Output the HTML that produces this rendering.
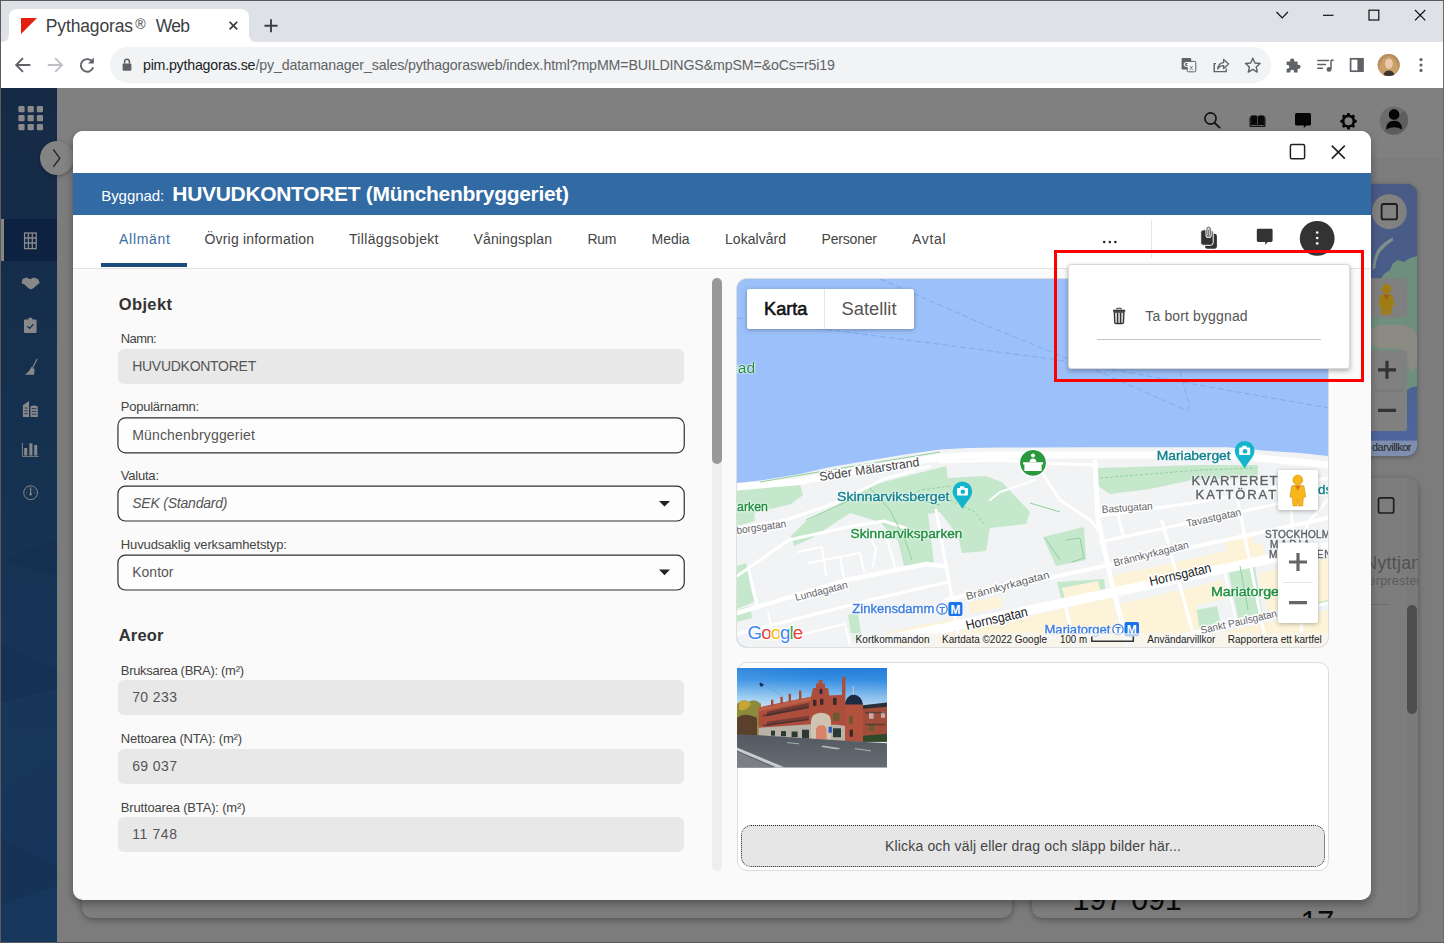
<!DOCTYPE html>
<html lang="sv"><head><meta charset="utf-8"><title>Pythagoras Web</title>
<style>
*{box-sizing:border-box;margin:0;padding:0}
html,body{width:1444px;height:943px;overflow:hidden;background:#808080;font-family:"Liberation Sans",sans-serif;color:#333}
.abs{position:absolute}
.tx{position:absolute;white-space:pre;line-height:normal}
#win{position:absolute;left:0;top:0;width:1444px;height:943px;overflow:hidden}
#win>div,#win>svg{position:absolute}
/* chrome */
#tabbar{left:0;top:0;width:1444px;height:42px;background:#dee1e6}
#tab{left:9px;top:9px;width:240px;height:34px;background:#fff;border-radius:8px 8px 0 0}
#toolbar{left:0;top:42px;width:1444px;height:46px;background:#fff}
#omni{left:110px;top:47px;width:1161px;height:35.6px;border-radius:17.8px;background:#f1f3f4}
/* page */
#page{left:1px;top:88px;width:1443px;height:855px;background:#808080;overflow:hidden}
#side{left:1px;top:88px;width:56px;height:855px;background:linear-gradient(180deg,#152a45 0%,#152d4a 20%,#15314f 40%,#173559 70%,#17365b 100%)}
#sideact{left:1px;top:219px;width:56px;height:42.2px;background:#0c2240;border-left:3px solid #858585}
.bgcard{background:#7d7d7d;border-radius:10px;box-shadow:0 2px 6px rgba(0,0,0,.33)}
#bgclip{left:1371px;top:88px;width:47px;height:855px;overflow:hidden}
#bgclip .tx{margin-left:-1371px;margin-top:-88px}
/* dialog */
#dlg{left:73px;top:131px;width:1298px;height:769px;background:#fafafa;border-radius:10px;overflow:hidden}
#dlgsh{left:73px;top:131px;width:1298px;height:769px;border-radius:10px;box-shadow:0 4px 9px rgba(0,0,0,.33)}
#dlg>div,#dlg>svg{position:absolute}
#dlgtop{left:0;top:0;width:1298px;height:42px;background:#fff}
#dlghead{left:0;top:42px;width:1298px;height:42px;background:#326aa3}
#dlgtabs{left:0;top:84px;width:1298px;height:53.5px;background:#fff;border-bottom:1px solid #e2e2e2}
#tabul{left:28px;top:132px;width:86px;height:4px;background:#1c4c7c}
.inp{left:45px;width:566px;height:34.5px;background:#e8e8e8;border-radius:6px}
.out{left:44px;width:568px;height:36.5px;background:#fdfdfd;border:1.5px solid #2b2b2b;border-radius:8px}
#scrtrack{left:639px;top:147px;width:10px;height:593px;background:#eee;border-radius:5px}
#scrthumb{left:639px;top:147px;width:10px;height:186px;background:#999;border-radius:5px}
#mapbox{left:664px;top:148px;width:591px;height:368px;border-radius:10px;overflow:hidden;background:#9cc0f9;box-shadow:0 0 0 1px #dedede}
#imgbox{left:664px;top:530.5px;width:592px;height:209.5px;border-radius:10px;border:1px solid #dcdcdc;background:#fff}
#drop{left:668px;top:694.3px;width:584px;height:41.5px;border-radius:10px;border:1px dotted #222;background:#e6e6e6}
#popup{left:1068px;top:264px;width:281.5px;height:104.5px;background:#fff;border-radius:3px;border:1px solid #d9d9d9;box-shadow:0 2px 5px rgba(0,0,0,.3)}
#red{left:1054px;top:250px;width:309.5px;height:132px;border:3.3px solid #fe0000}
</style></head><body>
<div id="win">
<div id="tabbar"></div>
<div id="tab"></div>
<div id="toolbar"></div>
<div id="omni"></div>
<div id="page"></div>
<div style="left:57px;top:88px;width:1387px;height:70px;background:#808080"></div>
<div style="left:57px;top:157.6px;width:1387px;height:786px;background:#7c7c7c"></div>
<!-- header icons -->
<svg style="left:1195px;top:104px" width="230" height="36" viewBox="1195 104 230 36">
 <circle cx="1210.5" cy="118.5" r="5.6" fill="none" stroke="#111" stroke-width="1.6"/>
 <path d="M1214.6 122.8 L1219.6 127.6" stroke="#111" stroke-width="1.8" stroke-linecap="round"/>
 <path d="M1250.5 116 Q1254 114.3 1257.4 116 V125.6 Q1254 124.2 1250.5 125.6 Z M1264.6 116 Q1261 114.3 1257.9 116 V125.6 Q1261 124.2 1264.6 125.6 Z" fill="#0a0a0a"/>
 <path d="M1250 117.5 V126.4 H1265 V117.5" fill="none" stroke="#0a0a0a" stroke-width="1"/>
 <path d="M1296.5 113 H1309.5 Q1311 113 1311 114.5 V124 Q1311 125.5 1309.5 125.5 H1306.5 L1303.6 128.2 L1304 125.5 H1296.5 Q1295 125.5 1295 124 V114.5 Q1295 113 1296.5 113 Z" fill="#050505"/>
 <g transform="translate(1348.5 121.2)">
  <circle r="5.3" fill="none" stroke="#050505" stroke-width="2.6"/>
  <g fill="#050505"><rect x="-1.45" y="-8.2" width="2.9" height="16.4" rx=".7"/><rect x="-1.45" y="-8.2" width="2.9" height="16.4" rx=".7" transform="rotate(45)"/><rect x="-1.45" y="-8.2" width="2.9" height="16.4" rx=".7" transform="rotate(90)"/><rect x="-1.45" y="-8.2" width="2.9" height="16.4" rx=".7" transform="rotate(135)"/></g>
  <circle r="4" fill="#808080"/>
 </g>
 <circle cx="1394" cy="120.7" r="14.3" fill="#6c6c6c"/>
 <path d="M1404.1 110.6 A14.3 14.3 0 0 1 1383.9 130.8 Z" fill="#5d5d5d"/>
 <circle cx="1394.1" cy="114.4" r="5.3" fill="#050505"/>
 <path d="M1386.2 129.6 Q1386 120.8 1394.1 120.8 Q1402.2 120.8 1402 129.6 Q1398 127.2 1394.1 127.2 Q1390.2 127.2 1386.2 129.6 Z" fill="#050505"/>
</svg>
<!-- bg map widget -->
<div style="left:1300px;top:184px;width:117.3px;height:272px;border-radius:10px;background:#465a82;overflow:hidden;box-shadow:0 1px 5px rgba(0,0,0,.3)">
 <svg class="abs" style="left:0;top:0" width="118" height="272" viewBox="1300 184 118 272">
  <defs><linearGradient id="bgw" x1="0" y1="0" x2="0" y2="1"><stop offset="0" stop-color="#495b84"/><stop offset=".6" stop-color="#4a5f8c"/><stop offset="1" stop-color="#4e67a0"/></linearGradient></defs>
  <rect x="1300" y="184" width="118" height="272" fill="url(#bgw)"/>
  <path d="M1392.6 237.6 Q1384 242 1378 249 Q1373 257 1372.4 270 L1375.4 268 Q1376 258 1380.6 251.6 Q1386 245 1393 240.6 Z" fill="#7f8f8c"/>
  <path d="M1417.3 256 L1410 258 L1404 262 L1398 260 L1393 263 L1390 270 L1384 274 L1380 280 L1371 284 V396 L1380 400 L1400 396 L1410 388 L1417.3 386 Z" fill="#6e8f7e"/>
  <path d="M1371 330 Q1380 322 1392 325 Q1404 322 1414 330 L1417.3 336 V366 L1410 372 L1406 352 Q1396 346 1384 349 L1371 346 Z" fill="#8b8a83"/>
  <rect x="1371" y="440.6" width="47" height="16" fill="#a9aeb9" opacity=".55"/>
  <circle cx="1389.3" cy="211.7" r="17.5" fill="#818181"/>
  <rect x="1381.6" y="204" width="15.4" height="15.4" rx="2" fill="none" stroke="#1c1c1c" stroke-width="1.8"/>
  <rect x="1340" y="278.3" width="67" height="39.7" rx="2" fill="#808080"/>
  <g transform="translate(88.6 -191)"><circle cx="1297.8" cy="480" r="4.9" fill="#a07c14"/><path d="M1291.5 487 Q1291.5 485.6 1293 485.6 H1302.6 Q1304.1 485.6 1304.1 487 L1305.6 496 Q1305.7 497.3 1304.6 497.3 H1303.4 L1302.6 506 H1298.6 L1297.8 499 L1297 506 H1293 L1292.2 497.3 H1291 Q1289.9 497.3 1290 496 Z" fill="#a07c14"/><path d="M1294.8 485.8 L1297.8 490.5 L1300.8 485.8 Z" fill="#a05a1a"/></g>
  <rect x="1340" y="350.5" width="67" height="80.5" rx="2" fill="#808080"/>
  <rect x="1375" y="390.3" width="28" height="1" fill="#747474"/>
  <path d="M1378 369.8 H1396 M1387 360.8 V378.8 M1378 410.4 H1396" stroke="#333" stroke-width="3.2" fill="none"/>
 </svg>
</div>
<!-- bg cards -->
<div class="bgcard" style="left:81.5px;top:478px;width:930px;height:440px"></div>
<div class="bgcard" style="left:1032px;top:478px;width:386px;height:440px;overflow:hidden">
 <div class="abs" style="left:375px;top:0;width:11px;height:440px;background:#7a7a7a"></div>
 <div class="abs" style="left:375px;top:127px;width:10px;height:109px;border-radius:5px;background:#4d4d4d"></div>
 <div class="abs" style="left:300px;top:126px;width:57px;height:1px;background:#6e6e6e"></div>
 <svg class="abs" style="left:345px;top:18px" width="20" height="20"><rect x="1.5" y="1.8" width="15.2" height="15.2" rx="2" fill="none" stroke="#1f1f1f" stroke-width="1.7"/></svg>
 <span class="tx" style="left:40.6px;top:404.1px;font-size:30.5px;color:#0a0a0a;letter-spacing:-.2px">197 091</span>
 <span class="tx" style="left:268.6px;top:427.2px;font-size:30.5px;color:#0a0a0a;letter-spacing:-.2px">17</span>
</div>
<div style="left:1442.5px;top:650px;width:1.5px;height:44px;background:#3c3c3c"></div>
<!-- sidebar toggle -->

<div id="side"></div>
<div id="sideact"></div>
<svg id="sidepat" style="left:1px;top:88px" width="56" height="855" viewBox="1 88 56 855"><g fill="#0a1d3a" fill-opacity=".13"><path d="M1 645 L57 669 V688 L1 702 Z"/><path d="M1 838 L57 866 V885 L1 904 Z"/><path d="M1 560 L57 540 V575 Z"/></g><g fill="#2a4d7a" fill-opacity=".05"><path d="M1 702 L57 688 V760 L1 790 Z"/><path d="M1 904 L57 885 V943 H1 Z"/></g></svg>
<div style="left:40px;top:141px;width:34px;height:34px;border-radius:17px;background:#838383;box-shadow:0 1px 4px rgba(0,0,0,.35)"></div>
<svg style="left:40px;top:141px" width="34" height="34"><path d="M13.3 8.5 L19.8 17.2 L13.3 25.8" fill="none" stroke="#222" stroke-width="1.3"/></svg>
<svg style="left:1px;top:88px" width="56" height="430" viewBox="1 88 56 430">
 <g fill="#8a8a8a">
  <rect x="18.4" y="106" width="6.2" height="6.2" rx="1.2"/><rect x="27.6" y="106" width="6.2" height="6.2" rx="1.2"/><rect x="36.8" y="106" width="6.2" height="6.2" rx="1.2"/>
  <rect x="18.4" y="115" width="6.2" height="6.2" rx="1.2"/><rect x="27.6" y="115" width="6.2" height="6.2" rx="1.2"/><rect x="36.8" y="115" width="6.2" height="6.2" rx="1.2"/>
  <rect x="18.4" y="124" width="6.2" height="6.2" rx="1.2"/><rect x="27.6" y="124" width="6.2" height="6.2" rx="1.2"/><rect x="36.8" y="124" width="6.2" height="6.2" rx="1.2"/>
 </g>
 <!-- building (active) -->
 <g fill="none" stroke="#8a8a8a" stroke-width="1.3"><rect x="24.6" y="233" width="11.6" height="15.6"/><path d="M28.4 233 V248.6 M32.3 233 V248.6 M24.6 238 H36.2 M24.6 243 H36.2"/></g>
 <!-- handshake -->
 <path d="M22.5 279 L26.5 277.6 L30 279.3 L33.6 277.6 L38 279 L39.8 283 L37.6 284.6 L33 288.6 Q30.5 290 28.6 288.2 L24.4 284.6 L21.6 283.2 Z" fill="#888"/>
 <!-- clipboard -->
 <path d="M25 319.5 H28 Q28.3 317.6 30.3 317.6 Q32.3 317.6 32.6 319.5 H35.6 Q36.6 319.5 36.6 320.5 V332 Q36.6 333 35.6 333 H25 Q24 333 24 332 V320.5 Q24 319.5 25 319.5 Z" fill="#888"/>
 <path d="M27.4 326.3 L29.6 328.4 L33.4 324.2" fill="none" stroke="#16305a" stroke-width="1.3"/>
 <!-- broom -->
 <path d="M37 359 L32.4 368.2" stroke="#888" stroke-width="1.1" fill="none"/>
 <path d="M31.2 367 L34.6 369 L34 374.7 L24.7 374.7 Q29.4 372 31.2 367 Z" fill="#888"/>
 <!-- city -->
 <path d="M22.9 417 V405.2 L29 401 V417 Z M30.4 417 V406.4 Q34 404.6 37.8 406.4 V417 Z" fill="#888"/>
 <path d="M24.4 408 H27.6 M24.4 410.8 H27.6 M24.4 413.6 H27.6 M31.8 408.6 H36.4 M31.8 411.4 H36.4 M31.8 414.2 H36.4" stroke="#17335a" stroke-width=".9"/>
 <!-- bar chart -->
 <path d="M22.4 442.8 V456.4 H38.7" fill="none" stroke="#888" stroke-width=".9"/>
 <path d="M24.2 448 H27.2 V455.6 H24.2 Z M29.4 443.2 H32.4 V455.6 H29.4 Z M34.2 445 H37.2 V455.6 H34.2 Z" fill="#888"/>
 <!-- gauge -->
 <circle cx="30.6" cy="492.7" r="6.9" fill="none" stroke="#888" stroke-width="1"/>
 <path d="M30.6 488 V494" stroke="#888" stroke-width="1.2"/><circle cx="30.6" cy="494.2" r="1.2" fill="#888"/>
 <path d="M26 492.7 H27.2 M34 492.7 H35.2 M30.6 487 V488 M27.4 489.4 L28.2 490.2 M33.8 489.4 L33 490.2" stroke="#888" stroke-width=".7"/>
</svg>

<div id="dlgsh"></div>
<div id="dlg">
 <div id="dlgtop"></div>
 <div id="dlghead"></div>
 <div id="dlgtabs"></div>
 <div id="tabul"></div>
 <div class="inp" style="top:218px"></div>
 <svg style="left:40px;top:280px" width="580" height="190" viewBox="40 280 580 190"><g fill="#fdfdfd" stroke="#303030" stroke-width="1.2">
 <rect x="44.95" y="286.95" width="566.3" height="34.9" rx="7.5"/><rect x="44.95" y="355.2" width="566.3" height="34.8" rx="7.5"/><rect x="44.95" y="424.2" width="566.3" height="34.8" rx="7.5"/></g></svg>
 <div class="inp" style="top:549px"></div>
 <div class="inp" style="top:618px"></div>
 <div class="inp" style="top:686px"></div>
 <div id="scrtrack"></div><div id="scrthumb"></div>
 <div id="mapbox"><svg width="591" height="368" viewBox="737 279 591 368" style="position:absolute;left:0;top:0;font-family:'Liberation Sans',sans-serif">
<rect x="737" y="279" width="591" height="368" fill="#9cc0f9"/>
<!-- ferry lines -->
<g fill="none" stroke="#7fabf3" stroke-width="1" stroke-dasharray="6 3">
<path d="M737 318 L942 344.5 L1056 359.6 L1328 408"/>
<path d="M880 279 L983 324 L1100 372 L1183 409 Q1190 412 1189 404 L1180 372"/>
</g>
<!-- land -->
<path d="M737 483 L760 480.5 L800 474 L828 467.5 L860 462 L905 454.5 L940 449.5 L968 448 L1000 447.6 L1100 447.3 L1170 447.3 L1228 447.3 L1263 450.5 L1300 453 L1328 456 L1328 647 L737 647 Z" fill="#f1f3f4"/>
<!-- parks -->
<g fill="#c5e8cc">
<path d="M737 489.5 L800 484 L803 495 L791 504 L754 513 L755 521 L737 526 Z"/>
<path d="M737 566 L746 563 L752 594 L756 601 L737 609 Z"/>
<path d="M737 610 L750 606 L752 618 L737 622 Z"/>
<path d="M806 521 L838 505 L868 486 L946 466 L948 478 L985 476 L1002 482 L1030 512 L1026 524 L990 528 L986 551 L962 553 L958 536 L940 512 L928 514 L934 563 L904 566 L898 541 L880 522 L850 513 L812 538 L794 546 L791 536 Z"/>
<path d="M1098 468 L1200 465 L1258 465 L1258 478 L1192 480 L1150 489 L1110 494 L1098 486 Z"/>
<path d="M1043 537 L1084 527 L1086 560 L1056 566 Z"/>
<path d="M1057 582 L1104 579 L1106 595 L1061 598 Z"/>
<path d="M1227 565 L1254 560 L1262 613 L1238 618 Z"/>
<path d="M1191 611 L1217 606 L1221 625 L1195 630 Z"/>
<path d="M1316 562 L1328 556 L1328 602 L1318 606 Z"/>
<path d="M848 615 L858 613 L862 640 L852 641 Z"/>
</g>
<!-- commercial blocks -->
<g fill="#fdf3d8">
<path d="M1107 577 L1180 561 L1262 543 L1266 556 L1190 573 L1111 591 Z"/>
<path d="M1224 538 L1252 532 L1254 545 L1226 551 Z"/>
<path d="M1030 616 L1112 597 L1117 618 L1125 647 L1000 647 L960 647 L900 647 L884 647 L940 634 Z"/>
<path d="M968 603 L1000 596 L1003 607 L970 614 Z"/><path d="M884 633 L958 617.5 L960 626 L886 642 Z"/>
<path d="M1062 588 L1098 581 L1102 596 L1066 603 Z"/>
<path d="M1118 604 L1186 589 L1222 580 L1226 598 L1196 606 L1200 632 L1190 640 L1140 647 L1128 647 Z"/>
<path d="M1258 574 L1278 569 L1328 558 L1328 600 L1300 606 L1268 613 Z"/>
<path d="M1204 636 L1270 622 L1328 610 L1328 647 L1208 647 Z"/>
</g>
<!-- roads -->
<g fill="none" stroke="#fff" stroke-linecap="round" stroke-linejoin="round">
<path d="M737 487 L760 485 L800 481.4 L828 475.5 L860 470 L905 462.5 L940 457.5 L968 455.3 L1000 455 L1100 455 L1170 455 L1228 455 L1263 458.5 L1300 462 L1328 465" stroke-width="7"/>
<path d="M940 462 L1000 460 L1040 463 L1097 465" stroke-width="3"/>
<path d="M884 640.5 L1035 609 L1330 546" stroke-width="9.5"/>
<path d="M945 600 L1035 581 L1328 518" stroke-width="4"/>
<path d="M1100 542 L1328 493" stroke-width="3"/>
<path d="M1100 516 L1200 502 L1328 478" stroke-width="3"/>
<path d="M1150 642 L1328 603" stroke-width="3"/>
<path d="M1095 462 L1098 520 L1112 584 L1124 630 L1130 647" stroke-width="5"/>
<path d="M1162 521 L1193 633 L1197 647" stroke-width="3"/>
<path d="M1237 497 L1263 628 L1267 647" stroke-width="3"/>
<path d="M1291 509 L1303 647" stroke-width="3"/>
<path d="M1117 511 L1123 535" stroke-width="3"/>
<path d="M1065 603 L1075 647" stroke-width="3"/>
<path d="M1223 566 L1238 628" stroke-width="2"/>
<path d="M1040 470 L1060 500 L1090 520 L1098 530" stroke-width="3"/>
<path d="M1035 480 L1000 492 L990 500" stroke-width="2"/>
<path d="M737 528 L786 520 L838 502 L884 479 L930 466" stroke-width="3"/>
<path d="M737 576 L789 540 L852 526 L884 521 L905 528" stroke-width="3"/>
<path d="M737 613 L847 580 L926 564 L945 566" stroke-width="4.5"/>
<path d="M737 634 L800 618 L870 600 L948 582" stroke-width="3"/>
<path d="M936 510 L952 598 L960 647" stroke-width="3"/>
<path d="M749 570 L757 606" stroke-width="3"/>
<path d="M887 540 L896 570" stroke-width="2.5"/>
<path d="M798 552 L822 547 L826 575 M808 563 L860 553 L864 572 M840 557 L844 578 M870 538 L876 548 L873 566" stroke-width="2"/>
<path d="M768 612 L774 640 M800 635 L845 624 L850 645" stroke-width="2"/>
<path d="M1328 500 L1310 520 L1300 540" stroke-width="3"/>
</g>
<!-- park paths -->
<g fill="none" stroke="#8fd19e" stroke-width="1">
<path d="M760 482 L830 470 L940 452" />
<path d="M806 520 L850 500 L900 495 L940 505"/>
<path d="M870 488 L890 510 L905 540 L912 560"/>
<path d="M905 500 L920 490 L950 486" stroke-dasharray="3 2"/>
<path d="M950 500 L975 512 L985 525" stroke-dasharray="3 2"/>
<path d="M1100 478 L1150 474 L1200 470 L1255 468" stroke-dasharray="3 2"/>
<path d="M1030 503 L1060 512 M1045 538 L1060 560 M1066 540 L1080 538 L1084 558 L1072 562"/>
<path d="M1240 566 L1248 610"/>
</g>
<!-- road labels -->
<g font-size="11.5" fill="#5f6368" stroke="#fff" stroke-width="3" paint-order="stroke" stroke-linejoin="round">
<text transform="translate(820 481) rotate(-8.6)" font-size="12.5" fill="#3c4043" textLength="101" lengthAdjust="spacingAndGlyphs">Söder Mälarstrand</text>
<text transform="translate(737 534) rotate(-8)" font-size="10.5" textLength="50" lengthAdjust="spacingAndGlyphs">borgsgatan</text>
<text transform="translate(796 601) rotate(-14)" font-size="10.5" textLength="54" lengthAdjust="spacingAndGlyphs">Lundagatan</text>
<text transform="translate(967 600) rotate(-15)" font-size="10.5" textLength="86" lengthAdjust="spacingAndGlyphs">Brännkyrkagatan</text>
<text transform="translate(1102 513) rotate(-4)" font-size="10.5" textLength="51" lengthAdjust="spacingAndGlyphs">Bastugatan</text>
<text transform="translate(1187 527) rotate(-12)" font-size="10.5" textLength="56" lengthAdjust="spacingAndGlyphs">Tavastgatan</text>
<text transform="translate(1114.5 566.5) rotate(-14)" font-size="10.5" textLength="77" lengthAdjust="spacingAndGlyphs">Brännkyrkagatan</text>
<text transform="translate(1201.5 634) rotate(-13)" font-size="10.5" textLength="78" lengthAdjust="spacingAndGlyphs">Sankt Paulsgatan</text>
<text transform="translate(967 630) rotate(-13)" font-size="13.5" fill="#202124" textLength="63" lengthAdjust="spacingAndGlyphs">Hornsgatan</text>
<text transform="translate(1150.5 586) rotate(-13)" font-size="13.5" fill="#202124" textLength="63" lengthAdjust="spacingAndGlyphs">Hornsgatan</text>
</g>
<!-- poi labels -->
<g font-size="13.5" stroke-linejoin="round" style="filter:drop-shadow(0 0 .6px #fff) drop-shadow(0 0 .6px #fff) drop-shadow(0 0 .8px #fff)">
<text x="837" y="500.7" fill="#12838f" textLength="112.5" lengthAdjust="spacingAndGlyphs" stroke="#12838f" stroke-width=".4">Skinnarviksberget</text>
<text x="850.5" y="537.8" fill="#1e8e3e" textLength="112" lengthAdjust="spacingAndGlyphs" stroke="#1e8e3e" stroke-width=".4">Skinnarviksparken</text>
<text x="737" y="510.5" fill="#1e8e3e" textLength="31" lengthAdjust="spacingAndGlyphs" stroke="#1e8e3e" stroke-width=".4">arken</text>
<text x="729.2" y="372.6" fill="#1e8e3e" font-size="15.5" stroke="none">bad</text>
<text x="1156.7" y="460" fill="#12838f" textLength="74" lengthAdjust="spacingAndGlyphs" stroke="#12838f" stroke-width=".4">Mariaberget</text>
<text x="1211" y="595.6" fill="#1e8e3e" textLength="72" lengthAdjust="spacingAndGlyphs" stroke="#1e8e3e" stroke-width=".4">Mariatorget</text>
<text x="852.3" y="613" fill="#3d7de0" textLength="82" lengthAdjust="spacingAndGlyphs" stroke="#3d7de0" stroke-width=".4">Zinkensdamm</text>
<text x="1044.5" y="633.5" fill="#3d7de0" textLength="66" lengthAdjust="spacingAndGlyphs" stroke="#3d7de0" stroke-width=".4">Mariatorget</text>
<text x="1318" y="494" fill="#12838f" stroke="#12838f" stroke-width=".4">ds</text>
<text x="1191.4" y="484.8" fill="#5f6368" font-size="13" textLength="86" lengthAdjust="spacing" stroke="#5f6368" stroke-width=".4">KVARTERET</text>
<text x="1195.6" y="498.8" fill="#5f6368" font-size="13" textLength="80.5" lengthAdjust="spacing" stroke="#5f6368" stroke-width=".4">KATTÖRAT</text>
<text x="1265" y="537.5" fill="#5f6368" font-size="10" textLength="72" lengthAdjust="spacing" stroke="#5f6368" stroke-width=".4">STOCKHOLMS</text>
<text x="1270" y="548" fill="#5f6368" font-size="10" textLength="40" lengthAdjust="spacing" stroke="#5f6368" stroke-width=".4">MARIA</text>
<text x="1269" y="558" fill="#5f6368" font-size="10" textLength="70" lengthAdjust="spacing" stroke="#5f6368" stroke-width=".4">MAGDALENA</text>
</g>
<!-- transit icons -->
<g>
<circle cx="942" cy="609" r="5.2" fill="#fff" stroke="#3d7de0" stroke-width="1.2"/>
<text x="942" y="612.6" font-size="9" font-weight="700" fill="#3d7de0" text-anchor="middle">T</text>
<rect x="948.4" y="602" width="14" height="14" rx="2" fill="#1a73e8"/>
<text x="955.4" y="613.5" font-size="12" font-weight="700" fill="#fff" text-anchor="middle">M</text>
<circle cx="1118" cy="629.5" r="5.2" fill="#fff" stroke="#3d7de0" stroke-width="1.2"/>
<text x="1118" y="633" font-size="9" font-weight="700" fill="#3d7de0" text-anchor="middle">T</text>
<rect x="1124.5" y="622" width="14.5" height="14.5" rx="2" fill="#1a73e8"/>
<text x="1131.7" y="634" font-size="12" font-weight="700" fill="#fff" text-anchor="middle">M</text>
</g>
<!-- camera pins -->
<g id="pin1">
<path d="M962.4 509 C958 501 952.6 497.5 952.6 491.3 A9.8 9.8 0 1 1 972.2 491.3 C972.2 497.5 966.8 501 962.4 509 Z" fill="#12b5cb"/>
<rect x="957" y="488" width="11" height="7.6" rx="1.2" fill="#fff"/><rect x="960" y="486.3" width="4.4" height="2.5" fill="#fff"/>
<circle cx="962.8" cy="491.8" r="2.3" fill="#12b5cb"/>
</g>
<g id="pin2">
<path d="M1244.6 468.5 C1240.2 460.5 1234.8 457 1234.8 450.8 A9.8 9.8 0 1 1 1254.4 450.8 C1254.4 457 1249 460.5 1244.6 468.5 Z" fill="#12b5cb"/>
<rect x="1239.2" y="447.5" width="11" height="7.6" rx="1.2" fill="#fff"/><rect x="1242.2" y="445.8" width="4.4" height="2.5" fill="#fff"/>
<circle cx="1245" cy="451.3" r="2.3" fill="#12b5cb"/>
</g>
<!-- green marker -->
<circle cx="1033" cy="462.8" r="13.7" fill="#2b9a3e" stroke="#fff" stroke-width="1.6"/>
<circle cx="1033" cy="455.6" r="2" fill="#fff"/>
<path d="M1029.6 462 Q1029.6 458.4 1033 458.4 Q1036.4 458.4 1036.4 462 Z" fill="#fff"/>
<path d="M1023 462.2 H1043 V464.6 H1041.6 V471 H1024.4 V464.6 H1023 Z" fill="#fff"/>
<!-- attribution -->
<rect x="850" y="633" width="478" height="14" fill="#f5f5f5" fill-opacity=".72"/>
<g font-size="10" fill="#222">
<text x="855.6" y="643" textLength="74" lengthAdjust="spacingAndGlyphs">Kortkommandon</text>
<text x="942" y="643" textLength="105" lengthAdjust="spacingAndGlyphs">Kartdata ©2022 Google</text>
<text x="1060" y="643" textLength="27" lengthAdjust="spacingAndGlyphs">100 m</text>
<text x="1147.3" y="643" textLength="68" lengthAdjust="spacingAndGlyphs">Användarvillkor</text>
<text x="1227.8" y="643" textLength="94" lengthAdjust="spacingAndGlyphs">Rapportera ett kartfel</text>
</g>
<path d="M1091.8 636.5 V641.2 H1133.3 V636.5" fill="none" stroke="#333" stroke-width="1.5"/>
<!-- google logo -->
<g font-size="18.8" stroke="#fff" stroke-width="2.5" paint-order="stroke" stroke-linejoin="round">
<text x="747.6" y="638.6"><tspan fill="#4285f4">G</tspan><tspan fill="#ea4335" dx="-1">o</tspan><tspan fill="#fbbc05" dx="-1">o</tspan><tspan fill="#4285f4" dx="-1">g</tspan><tspan fill="#34a853" dx="-1">l</tspan><tspan fill="#ea4335" dx="-1">e</tspan></text>
</g>
<!-- controls -->
<g>
<rect x="747" y="289" width="167" height="40" rx="2" fill="#fff" style="filter:drop-shadow(0 1px 2px rgba(0,0,0,.3))"/>
<rect x="824" y="289" width="1" height="40" fill="#e6e6e6"/>
<text x="764" y="315" font-size="18" font-weight="400" fill="#111" stroke="#111" stroke-width=".55" textLength="43.5" lengthAdjust="spacingAndGlyphs">Karta</text>
<text x="841.5" y="315" font-size="18" fill="#565656" textLength="55" lengthAdjust="spacingAndGlyphs">Satellit</text>
<rect x="1278" y="470" width="40" height="40" rx="2" fill="#fff" style="filter:drop-shadow(0 1px 2px rgba(0,0,0,.3))"/>
<rect x="1278" y="542.5" width="40" height="80.5" rx="2" fill="#fff" style="filter:drop-shadow(0 1px 2px rgba(0,0,0,.3))"/>
<rect x="1283" y="582" width="30" height="1" fill="#e6e6e6"/>
<path d="M1289 562 H1307 M1298 553 V571 M1289 602.6 H1307" stroke="#666" stroke-width="3.2" fill="none"/>
<!-- pegman -->
<g>
<circle cx="1297.8" cy="480" r="4.9" fill="#f9b61b" stroke="#d48f0a" stroke-width=".6"/>
<path d="M1291.5 487 Q1291.5 485.6 1293 485.6 H1302.6 Q1304.1 485.6 1304.1 487 L1305.6 496 Q1305.7 497.3 1304.6 497.3 H1303.4 L1302.6 506 H1298.6 L1297.8 499 L1297 506 H1293 L1292.2 497.3 H1291 Q1289.9 497.3 1290 496 Z" fill="#f9b61b" stroke="#d48f0a" stroke-width=".6"/>
<path d="M1294.8 485.8 L1297.8 490.5 L1300.8 485.8 Z" fill="#e0761a"/>
</g>
</g>
</svg>
</div>
 <div id="imgbox"></div>
 <svg style="left:664px;top:537.3px" width="150" height="99.5" viewBox="0 0 150 100" preserveAspectRatio="none">
 <defs>
  <linearGradient id="sky" x1="0" y1="0" x2="0" y2="1"><stop offset="0" stop-color="#2680da"/><stop offset=".12" stop-color="#3a93e4"/><stop offset=".3" stop-color="#9ccdf2"/><stop offset=".42" stop-color="#d0e6f7"/><stop offset="1" stop-color="#dcecf8"/></linearGradient><linearGradient id="skyh" x1="0" y1="0" x2="1" y2="0"><stop offset="0" stop-color="#fff" stop-opacity=".06"/><stop offset=".5" stop-color="#0a5cc4" stop-opacity=".06"/><stop offset="1" stop-color="#0a5cc4" stop-opacity=".1"/></linearGradient>
  <linearGradient id="road" x1="0" y1="0" x2="0" y2="1"><stop offset="0" stop-color="#525960"/><stop offset="1" stop-color="#666c72"/></linearGradient>
 </defs>
 <rect width="150" height="100" fill="url(#sky)"/><rect width="150" height="45" fill="url(#skyh)"/>
 <!-- trees left -->
 <path d="M0 36 Q6 30 12 34 Q18 30 24 36 V68 H0 Z" fill="#8e8a3c"/>
 <path d="M0 50 Q8 44 20 50 V68 H0 Z" fill="#5a3f2a"/>
 <path d="M2 34 Q8 30 14 36 Q10 44 2 42 Z" fill="#c7a535"/>
 <!-- right building -->
 <path d="M124 38 L150 36 V74 H124 Z" fill="#a04e3a"/>
 <path d="M126 37.5 L150 34.6 V39 L126 41 Z" fill="#2b2f3a"/>
 <!-- main building -->
 <path d="M21.5 40 L30 37.6 L74 29 L76 20 L79 20 L79 15.5 L81.6 15.5 L81.6 12 L85.4 12 L85.4 15.5 L88 15.5 L88 20 L91 20 L92.4 27.6 L105 27 L105 9 L108.4 9 L108.4 34 L126 38 L126 74 L21.5 68 Z" fill="#ad4e3c"/>
 <path d="M21.5 40 L74 29 L74 33 L21.5 44 Z" fill="#bb5f49"/>
 <!-- tower + dome -->
 <path d="M108.4 36 H126 V74 H108.4 Z" fill="#b2523e"/>
 <path d="M108 36.6 Q109 27.4 116.6 26.6 Q124.6 27.4 126 36.6 Z" fill="#1d2a44"/>
 <path d="M116.3 18 V27" stroke="#c8d0da" stroke-width=".8"/>
 <!-- chimneys -->
 <path d="M34 32 h2.4 v6 h-2.4z M43.4 29 h2.4 v7 h-2.4z M51.6 26 h2.4 v8 h-2.4z M62 22.6 h2.4 v9 h-2.4z" fill="#a84a36"/>
 <!-- windows rows -->
 <g fill="#3b2a2a"><path d="M30 44 L72 35 V39.6 L30 48.4 Z" opacity=".55"/><path d="M30 54 L72 48 V52 L30 58 Z" opacity=".5"/>
 <rect x="76" y="32" width="3.4" height="6"/><rect x="83" y="31" width="3.4" height="6"/><rect x="96" y="30" width="3.6" height="7"/><rect x="96" y="45" width="6.6" height="8" fill="#6a5a2e"/><rect x="112" y="48" width="4" height="8" fill="#6a5a2e"/><rect x="112.6" y="62" width="3.4" height="7"/><rect x="132" y="45" width="4.6" height="6" fill="#caa"/><rect x="132" y="57" width="5" height="6" fill="#6a5a2e"/><rect x="144" y="44" width="4" height="6" fill="#caa"/>
 <path d="M82.6 22 Q84 19.6 85.4 22 V26 H82.6 Z" fill="#1d2a44"/></g>
 <g fill="#2e2a2e" opacity=".55"><path d="M26 47 L72 38.6 V40.4 L26 49 Z"/><path d="M26 57 L72 51 V52.6 L26 58.8 Z"/><rect x="128" y="44" width="20" height="1.6"/><rect x="128" y="56" width="20" height="1.6"/></g>
 <!-- ground floor light band -->
 <path d="M21.5 60 L74 56.6 L100 57 L108 58 V73 L21.5 68 Z" fill="#b9b2a6"/>
 <g fill="#2c3a36"><rect x="34" y="63" width="4" height="5"/><rect x="44" y="63.4" width="5" height="5.2"/><rect x="54.6" y="63.8" width="6" height="5.6"/><rect x="65" y="62" width="7" height="9"/><rect x="96" y="60.6" width="8" height="9"/></g>
 <!-- portal -->
 <path d="M74 71 V53 Q74 45.6 84.4 45 Q94 45.6 94 53 V72 Z" fill="#cfc3b2"/>
 <path d="M79 71.4 V63 Q79 57.6 84.4 57.6 Q89.6 57.6 89.6 63 V72 Z" fill="#d9836a"/>
 <rect x="91.6" y="59" width="3.2" height="6" fill="#2456c8"/>
 <!-- hedge -->
 <path d="M126 68 L150 66 V74 H126 Z" fill="#2f4a2a"/>
 <!-- road -->
 <path d="M0 66.6 L22 67.6 L108 73 L150 75.6 V100 H0 Z" fill="url(#road)"/>
 <path d="M0 80 L48 100 H40 L0 83 Z" fill="#c9ccd0"/>
 <path d="M0 84 L36 100 H0 Z" fill="#7b7f84"/>
 <path d="M86 78 L104 80.6 L100 82 L84 79.4 Z" fill="#aeb3b8"/>
 <path d="M50 75 L62 76.2 M118 81 L134 83.4" stroke="#b5babf" stroke-width=".9"/>
 <!-- lamp -->
 <path d="M23 14.6 L27 16.6 L24.6 19 L22.4 17 Z" fill="#1b2c4a"/><path d="M27 17 L46 28" stroke="#6f93c0" stroke-width=".4"/>
</svg>

 <div id="drop"></div>
</div>
<svg style="left:1090px;top:131px" width="281" height="140" viewBox="1090 131 281 140">
 <rect x="1290.4" y="144.6" width="14.2" height="14.2" rx="1.6" fill="none" stroke="#222" stroke-width="1.5"/>
 <path d="M1331.8 145.6 L1344.8 158.6 M1344.8 145.6 L1331.8 158.6" stroke="#222" stroke-width="1.6" fill="none"/>
 <circle cx="1104.2" cy="242" r="1.25" fill="#222"/><circle cx="1109.8" cy="242" r="1.25" fill="#222"/><circle cx="1115.4" cy="242" r="1.25" fill="#222"/>
 <rect x="1151" y="220" width="1" height="38" fill="#e4e4e4"/>
 <!-- attachments -->
 <rect x="1205" y="233.8" width="11.9" height="15" rx="2.4" fill="#333"/>
 <rect x="1200.7" y="229.8" width="12.5" height="15.5" rx="2.6" fill="#333" stroke="#fff" stroke-width="1"/>
 <rect x="1205.5" y="225.8" width="6.2" height="12.2" rx="3.1" fill="#fff"/>
 <rect x="1206.9" y="227.2" width="3.4" height="9.6" rx="1.7" fill="#e4e4e4" stroke="#444" stroke-width=".9"/>
 <rect x="1208.2" y="229.6" width=".9" height="6.4" fill="#666"/>
 <!-- comment -->
 <path d="M1258.2 228.8 H1271.2 Q1272.6 228.8 1272.6 230.2 V240.5 Q1272.6 241.9 1271.2 241.9 H1268 L1264.8 244.7 L1265.4 241.9 H1258.2 Q1256.8 241.9 1256.8 240.5 V230.2 Q1256.8 228.8 1258.2 228.8 Z" fill="#333"/>
 <!-- kebab -->
 <circle cx="1317.2" cy="238.4" r="17.4" fill="#333"/>
 <circle cx="1317.2" cy="232.6" r="1.35" fill="#f2f2f2"/><circle cx="1317.2" cy="238" r="1.35" fill="#f2f2f2"/><circle cx="1317.2" cy="243.4" r="1.35" fill="#f2f2f2"/>
</svg>

<div id="popup"></div>
<svg style="left:1068px;top:264px" width="282" height="105" viewBox="1068 264 282 105">
 <rect x="1097" y="339" width="224" height="1" fill="#c4c4c4"/>
 <path d="M1116.6 309.4 Q1116.6 308.2 1117.8 308.2 H1120.2 Q1121.4 308.2 1121.4 309.4" fill="none" stroke="#333" stroke-width="1.1"/>
 <rect x="1113" y="309.8" width="12.3" height="2" rx=".6" fill="#333"/>
 <path d="M1114.3 312.2 H1123.9 L1123.5 322.4 Q1123.4 323.5 1122.2 323.5 H1116 Q1114.8 323.5 1114.7 322.4 Z" fill="#d0d0d0" stroke="#333" stroke-width="1.3"/>
 <path d="M1117.6 313 V323 M1120.6 313 V323" stroke="#333" stroke-width="1.25"/>
</svg>
<svg style="left:655px;top:495px" width="20" height="90" viewBox="655 495 20 90"><path d="M659 501 H670 L664.5 506.6 Z M659 569.6 H670 L664.5 575.2 Z" fill="#222"/></svg>
<span class="tx" id="t0" style="left:45.80px;top:15.87px;font-size:17.5px;color:#3c4043;font-weight:400;letter-spacing:-0.148px;">Pythagoras</span>
<span class="tx" id="t1" style="left:135.20px;top:16.10px;font-size:14px;color:#3c4043;font-weight:400;letter-spacing:0.000px;">®</span>
<span class="tx" id="t2" style="left:155.80px;top:15.87px;font-size:17.5px;color:#3c4043;font-weight:400;letter-spacing:-0.736px;">Web</span>
<span class="tx" id="t3" style="left:143.00px;top:56.91px;font-size:14.2px;color:#202124;font-weight:400;letter-spacing:-0.215px;">pim.pythagoras.se</span>
<span class="tx" id="t4" style="left:255.50px;top:56.91px;font-size:14.2px;color:#5f6368;font-weight:400;letter-spacing:-0.131px;">/py_datamanager_sales/pythagorasweb/index.html?mpMM=BUILDINGS&amp;mpSM=&amp;oCs=r5i19</span>
<span class="tx" id="t5" style="left:101.20px;top:186.98px;font-size:15px;color:#fff;font-weight:400;letter-spacing:-0.042px;">Byggnad:</span>
<span class="tx" id="t6" style="left:172.30px;top:181.85px;font-size:21px;color:#fff;font-weight:700;letter-spacing:-0.316px;">HUVUDKONTORET (Münchenbryggeriet)</span>
<span class="tx" id="t7" style="left:119.00px;top:231.10px;font-size:14px;color:#3a6ea5;font-weight:400;letter-spacing:0.719px;">Allmänt</span>
<span class="tx" id="t8" style="left:204.50px;top:231.10px;font-size:14px;color:#444;font-weight:400;letter-spacing:0.182px;">Övrig information</span>
<span class="tx" id="t9" style="left:349.00px;top:231.10px;font-size:14px;color:#444;font-weight:400;letter-spacing:0.339px;">Tilläggsobjekt</span>
<span class="tx" id="t10" style="left:473.50px;top:231.10px;font-size:14px;color:#444;font-weight:400;letter-spacing:0.144px;">Våningsplan</span>
<span class="tx" id="t11" style="left:587.50px;top:231.10px;font-size:14px;color:#444;font-weight:400;letter-spacing:-0.281px;">Rum</span>
<span class="tx" id="t12" style="left:651.50px;top:231.10px;font-size:14px;color:#444;font-weight:400;letter-spacing:-0.035px;">Media</span>
<span class="tx" id="t13" style="left:725.00px;top:231.10px;font-size:14px;color:#444;font-weight:400;letter-spacing:0.037px;">Lokalvård</span>
<span class="tx" id="t14" style="left:821.50px;top:231.10px;font-size:14px;color:#444;font-weight:400;letter-spacing:-0.188px;">Personer</span>
<span class="tx" id="t15" style="left:912.00px;top:231.10px;font-size:14px;color:#444;font-weight:400;letter-spacing:0.656px;">Avtal</span>
<span class="tx" id="t16" style="left:118.70px;top:295.20px;font-size:16.5px;color:#333;font-weight:700;letter-spacing:0.388px;">Objekt</span>
<span class="tx" id="t17" style="left:120.80px;top:331.02px;font-size:13px;color:#444;font-weight:400;letter-spacing:-0.599px;">Namn:</span>
<span class="tx" id="t18" style="left:132.20px;top:358.10px;font-size:14px;color:#555;font-weight:400;letter-spacing:-0.276px;">HUVUDKONTORET</span>
<span class="tx" id="t19" style="left:120.80px;top:399.32px;font-size:13px;color:#444;font-weight:400;letter-spacing:-0.241px;">Populärnamn:</span>
<span class="tx" id="t20" style="left:132.20px;top:427.10px;font-size:14px;color:#555;font-weight:400;letter-spacing:0.171px;">Münchenbryggeriet</span>
<span class="tx" id="t21" style="left:120.80px;top:468.02px;font-size:13px;color:#444;font-weight:400;letter-spacing:-0.219px;">Valuta:</span>
<span class="tx" id="t22" style="left:132.20px;top:495.40px;font-size:14px;color:#555;font-weight:400;letter-spacing:-0.212px;font-style:italic;">SEK (Standard)</span>
<span class="tx" id="t23" style="left:120.80px;top:536.52px;font-size:13px;color:#444;font-weight:400;letter-spacing:-0.111px;">Huvudsaklig verksamhetstyp:</span>
<span class="tx" id="t24" style="left:132.20px;top:564.10px;font-size:14px;color:#555;font-weight:400;letter-spacing:0.010px;">Kontor</span>
<span class="tx" id="t25" style="left:118.70px;top:626.10px;font-size:16.5px;color:#333;font-weight:700;letter-spacing:0.196px;">Areor</span>
<span class="tx" id="t26" style="left:120.80px;top:662.52px;font-size:13px;color:#444;font-weight:400;letter-spacing:-0.305px;">Bruksarea (BRA): (m²)</span>
<span class="tx" id="t27" style="left:132.20px;top:689.10px;font-size:14px;color:#555;font-weight:400;letter-spacing:0.394px;">70 233</span>
<span class="tx" id="t28" style="left:120.80px;top:731.02px;font-size:13px;color:#444;font-weight:400;letter-spacing:-0.212px;">Nettoarea (NTA): (m²)</span>
<span class="tx" id="t29" style="left:132.20px;top:758.10px;font-size:14px;color:#555;font-weight:400;letter-spacing:0.394px;">69 037</span>
<span class="tx" id="t30" style="left:120.80px;top:799.52px;font-size:13px;color:#444;font-weight:400;letter-spacing:-0.174px;">Bruttoarea (BTA): (m²)</span>
<span class="tx" id="t31" style="left:132.20px;top:826.10px;font-size:14px;color:#555;font-weight:400;letter-spacing:0.604px;">11 748</span>
<span class="tx" id="t32" style="left:885.00px;top:838.10px;font-size:14px;color:#444;font-weight:400;letter-spacing:0.165px;">Klicka och välj eller drag och släpp bilder här...</span>
<span class="tx" id="t33" style="left:1145.30px;top:307.80px;font-size:14px;color:#555;font-weight:400;letter-spacing:0.135px;">Ta bort byggnad</span>
<div id="bgclip"><span class="tx" id="t34" style="left:1364.50px;top:552.87px;font-size:17.5px;color:#505050;font-weight:400;letter-spacing:0.339px;">Nyttjan</span>
<span class="tx" id="t35" style="left:1368.60px;top:574.48px;font-size:12.5px;color:#5a5a5a;font-weight:400;letter-spacing:0.234px;">erprester</span>
<span class="tx" id="t36" style="left:1372.00px;top:440.66px;font-size:11px;color:#222;font-weight:400;letter-spacing:-0.513px;">darvillkor</span></div>
<div id="red"></div>
<svg style="left:0;top:0" width="1444" height="88" viewBox="0 0 1444 88">
 <!-- tab curves -->
 <path d="M1 42 H9 V34 Q9 42 1 42 Z M249 42 H257 Q249 42 249 34 Z" fill="#fff"/>
 <path d="M21 18 H37 L21 34 Z" fill="#e3200f"/>
 <path d="M229.6 21.8 L237.2 29.4 M237.2 21.8 L229.6 29.4" stroke="#3c4043" stroke-width="1.7" fill="none"/>
 <path d="M264.5 25.7 H277.5 M271 19.2 V32.2" stroke="#3c4043" stroke-width="1.9" fill="none"/>
 <!-- window controls -->
 <path d="M1276.5 12 L1282.2 18 L1287.9 12" stroke="#111" stroke-width="1.2" fill="none"/>
 <path d="M1323 15.3 H1333.5" stroke="#111" stroke-width="1.2"/>
 <rect x="1369" y="10.2" width="9.8" height="9.8" fill="none" stroke="#111" stroke-width="1.2"/>
 <path d="M1415 10 L1425.3 20.3 M1425.3 10 L1415 20.3" stroke="#111" stroke-width="1.2"/>
 <!-- nav -->
 <g stroke="#5f6368" stroke-width="1.9" fill="none"><path d="M30.4 65 H16.6 M23 58.2 L16.2 65 L23 71.8"/></g>
 <g stroke="#bdc1c6" stroke-width="1.9" fill="none"><path d="M47.8 65 H61.6 M55.2 58.2 L62 65 L55.2 71.8"/></g>
 <g stroke="#5f6368" stroke-width="1.9" fill="none"><path d="M92.6 62.2 A6.3 6.3 0 1 0 93.2 67.2"/></g>
 <path d="M93.8 57.6 V63.4 H88 Z" fill="#5f6368"/>
 <!-- lock -->
 <rect x="122.6" y="63.4" width="8.8" height="7.4" rx="1.2" fill="#5f6368"/>
 <path d="M124.6 63.6 V61.6 Q124.6 59.2 127 59.2 Q129.4 59.2 129.4 61.6 V63.6" fill="none" stroke="#5f6368" stroke-width="1.5"/>
 <!-- translate -->
 <rect x="1181.6" y="58" width="9.6" height="11.6" rx="1" fill="#5f6368"/>
 <rect x="1187.2" y="61.4" width="8.6" height="10.4" rx="1" fill="#f1f3f4" stroke="#5f6368" stroke-width="1"/>
 <text x="1183.4" y="67" font-size="7.5" font-weight="700" fill="#fff">G</text>
 <text x="1189.4" y="70" font-size="7" fill="#5f6368">x</text>
 <!-- share -->
 <path d="M1216 63.6 H1214.2 V71.6 H1226.2 V68.6" fill="none" stroke="#5f6368" stroke-width="1.4"/>
 <path d="M1217.6 69 Q1218.4 63 1223.6 62.6 V59.4 L1228.6 64 L1223.6 68.6 V65.6 Q1219.6 65.6 1217.6 69 Z" fill="none" stroke="#5f6368" stroke-width="1.3" stroke-linejoin="round"/>
 <!-- star -->
 <path d="M1252.8 58.2 L1254.9 63 L1260.1 63.5 L1256.2 67 L1257.3 72.1 L1252.8 69.4 L1248.3 72.1 L1249.4 67 L1245.5 63.5 L1250.7 63 Z" fill="none" stroke="#5f6368" stroke-width="1.4" stroke-linejoin="round"/>
 <!-- puzzle -->
 <path d="M1286.6 61.4 H1290.2 Q1289.6 58.4 1292.2 58.4 Q1294.8 58.4 1294.2 61.4 H1297.6 V64.8 Q1300.6 64.2 1300.6 66.8 Q1300.6 69.4 1297.6 68.8 V72.4 H1294 Q1294.4 69.8 1292.2 69.8 Q1290 69.8 1290.4 72.4 H1286.6 V68.6 Q1289.4 69 1289.4 66.8 Q1289.4 64.6 1286.6 65 Z" fill="#5f6368"/>
 <!-- media -->
 <path d="M1317.2 60.6 H1329 M1317.2 64.4 H1326 M1317.2 68.2 H1323" stroke="#5f6368" stroke-width="1.5"/>
 <path d="M1331 60 V69.2" stroke="#5f6368" stroke-width="1.5"/><path d="M1331 60.3 H1333.6" stroke="#5f6368" stroke-width="1.7"/>
 <circle cx="1329" cy="69.4" r="2.4" fill="#5f6368"/>
 <!-- side panel -->
 <rect x="1350.6" y="58.8" width="12.4" height="12.4" fill="none" stroke="#5f6368" stroke-width="1.7"/>
 <rect x="1357.4" y="58.8" width="5.6" height="12.4" fill="#5f6368"/>
 <!-- avatar -->
 <circle cx="1388.7" cy="65" r="11" fill="#c9a27a"/>
 <clipPath id="avc"><circle cx="1388.7" cy="65" r="11"/></clipPath>
 <g clip-path="url(#avc)">
  <rect x="1377" y="54" width="24" height="22" fill="#b98f5e"/>
  <path d="M1378 76 Q1379 58 1388.7 56 Q1398.4 58 1399.4 76 Z" fill="#c7a06a"/>
  <ellipse cx="1388.9" cy="63.6" rx="4" ry="5.2" fill="#ecc9aa"/>
  <path d="M1383 76 Q1384.4 70.6 1388.9 70.6 Q1393.4 70.6 1394.8 76 Z" fill="#3a3330"/>
 </g>
 <!-- menu -->
 <circle cx="1421" cy="59.6" r="1.6" fill="#5f6368"/><circle cx="1421" cy="65" r="1.6" fill="#5f6368"/><circle cx="1421" cy="70.4" r="1.6" fill="#5f6368"/>
</svg>

<div style="left:0;top:0;width:1444px;height:1.2px;background:#5b5b5b"></div>
<div style="left:0;top:0;width:1.2px;height:943px;background:#5e5a5a"></div>
<div style="left:1443px;top:0;width:1px;height:943px;background:#6a6a6a"></div>
<div style="left:0;top:942px;width:1444px;height:1px;background:#5b5b5b"></div>

</div>
</body></html>
